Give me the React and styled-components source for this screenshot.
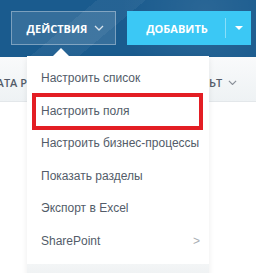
import React from 'react';
import styled, { createGlobalStyle } from 'styled-components';

const GlobalStyle = createGlobalStyle`
  html, body {
    margin: 0;
    padding: 0;
    background: #ffffff;
  }
  body {
    font-family: "Liberation Sans", Arial, sans-serif;
  }
`;

const Page = styled.div`
  position: relative;
  width: 256px;
  height: 273px;
  overflow: hidden;
  display: flex;
  flex-direction: column;
`;

const Header = styled.div`
  height: 57px;
  box-sizing: border-box;
  padding: 11px 5px 0 11px;
  display: flex;
  gap: 11px;
  background:
    linear-gradient(140deg, transparent 0 30%, rgba(255,255,255,0.05) 30% 45%, transparent 45% 100%),
    radial-gradient(circle at 80% 20%, rgba(255,255,255,0.07), transparent 40%),
    #1a5b8e;
`;

const ActionButton = styled.div`
  width: 105px;
  height: 34px;
  box-sizing: border-box;
  border: 1px solid rgba(255, 255, 255, 0.35);
  background: rgba(255, 255, 255, 0.12);
  display: flex;
  align-items: center;
  justify-content: center;
  gap: 7px;
  color: #ffffff;
  font-family: "Open Sans", sans-serif;
  font-weight: 700;
  font-size: 11px;
  padding-left: 4px;
`;

const AddButton = styled.div`
  width: 124px;
  height: 34px;
  background: #3bc8f5;
  display: flex;
  align-items: center;
  color: #ffffff;
  font-family: "Open Sans", sans-serif;
  font-weight: 700;
  font-size: 11px;
`;

const AddLabel = styled.div`
  flex: 1;
  text-align: center;
  padding-left: 2px;
`;

const AddSplit = styled.div`
  width: 25px;
  height: 20px;
  border-left: 1px solid rgba(255, 255, 255, 0.4);
  display: flex;
  align-items: center;
  justify-content: center;
`;

const Caret = styled.div`
  width: 0;
  height: 0;
  border-left: 4px solid transparent;
  border-right: 4px solid transparent;
  border-top: 4px solid #ffffff;
`;

const Toolbar = styled.div`
  height: 45px;
  box-sizing: border-box;
  display: flex;
  align-items: center;
  padding-top: 7px;
  background: linear-gradient(#f9fafb, #eef2f4);
  border-bottom: 1px solid #e3e7ea;
  color: #535c69;
  font-family: "Open Sans", sans-serif;
  font-size: 11px;
  font-weight: 600;
`;

const ToolbarClip = styled.div`
  width: ${p => p.$width}px;
  overflow: hidden;
  display: flex;
  align-items: center;
  justify-content: ${p => (p.$end ? 'flex-end' : 'flex-start')};
  gap: 6px;
  white-space: nowrap;
`;

const ToolbarGap = styled.div`
  width: 182px;
`;

const Menu = styled.div`
  position: absolute;
  left: 27px;
  top: 56px;
  width: 182px;
  padding-top: 6px;
  background: #ffffff;
  box-shadow: 0 2px 6px rgba(0, 0, 0, 0.08);
`;

const Pointer = styled.div`
  position: absolute;
  left: 26px;
  top: -8px;
  width: 0;
  height: 0;
  border-left: 8px solid transparent;
  border-right: 8px solid transparent;
  border-bottom: 8px solid #ffffff;
`;

const Item = styled.div`
  height: 32.5px;
  display: flex;
  align-items: center;
  justify-content: space-between;
  padding: 0 9px 0 14px;
  color: #535c69;
  font-size: 12px;
  white-space: nowrap;
`;

const Arrow = styled.span`
  color: #a8adb4;
  font-size: 12px;
`;

const MenuFooter = styled.div`
  margin-top: 7px;
  height: 20px;
  background: linear-gradient(#f3f5f6, #eceff1);
`;

const Highlight = styled.div`
  position: absolute;
  left: 5px;
  top: 37px;
  width: 171px;
  height: 37px;
  box-sizing: border-box;
  border: 4px solid #e31e24;
`;

const Chevron = ({ color = '#ffffff', size = 10 }) => (
  <svg width={size} height={size * 0.6} viewBox="0 0 10 6">
    <path d="M1 1l4 4 4-4" fill="none" stroke={color} strokeWidth="1.3" />
  </svg>
);

const items = [
  'Настроить список',
  'Настроить поля',
  'Настроить бизнес-процессы',
  'Показать разделы',
  'Экспорт в Excel',
];

export default function App() {
  return (
    <>
      <GlobalStyle />
      <Page>
        <Header>
          <ActionButton>
            ДЕЙСТВИЯ <Chevron color="rgba(255,255,255,0.8)" />
          </ActionButton>
          <AddButton>
            <AddLabel>ДОБАВИТЬ</AddLabel>
            <AddSplit><Caret /></AddSplit>
          </AddButton>
        </Header>
        <Toolbar>
          <ToolbarClip $width={27} $end>ДАТА Р</ToolbarClip>
          <ToolbarGap />
          <ToolbarClip $width={47}>
            <span>ЬТ</span>
            <Chevron color="#8a9099" size={9} />
          </ToolbarClip>
        </Toolbar>
        <Menu>
          <Pointer />
          {items.map(t => <Item key={t}>{t}</Item>)}
          <Item>SharePoint <Arrow>&gt;</Arrow></Item>
          <MenuFooter />
          <Highlight />
        </Menu>
      </Page>
    </>
  );
}
